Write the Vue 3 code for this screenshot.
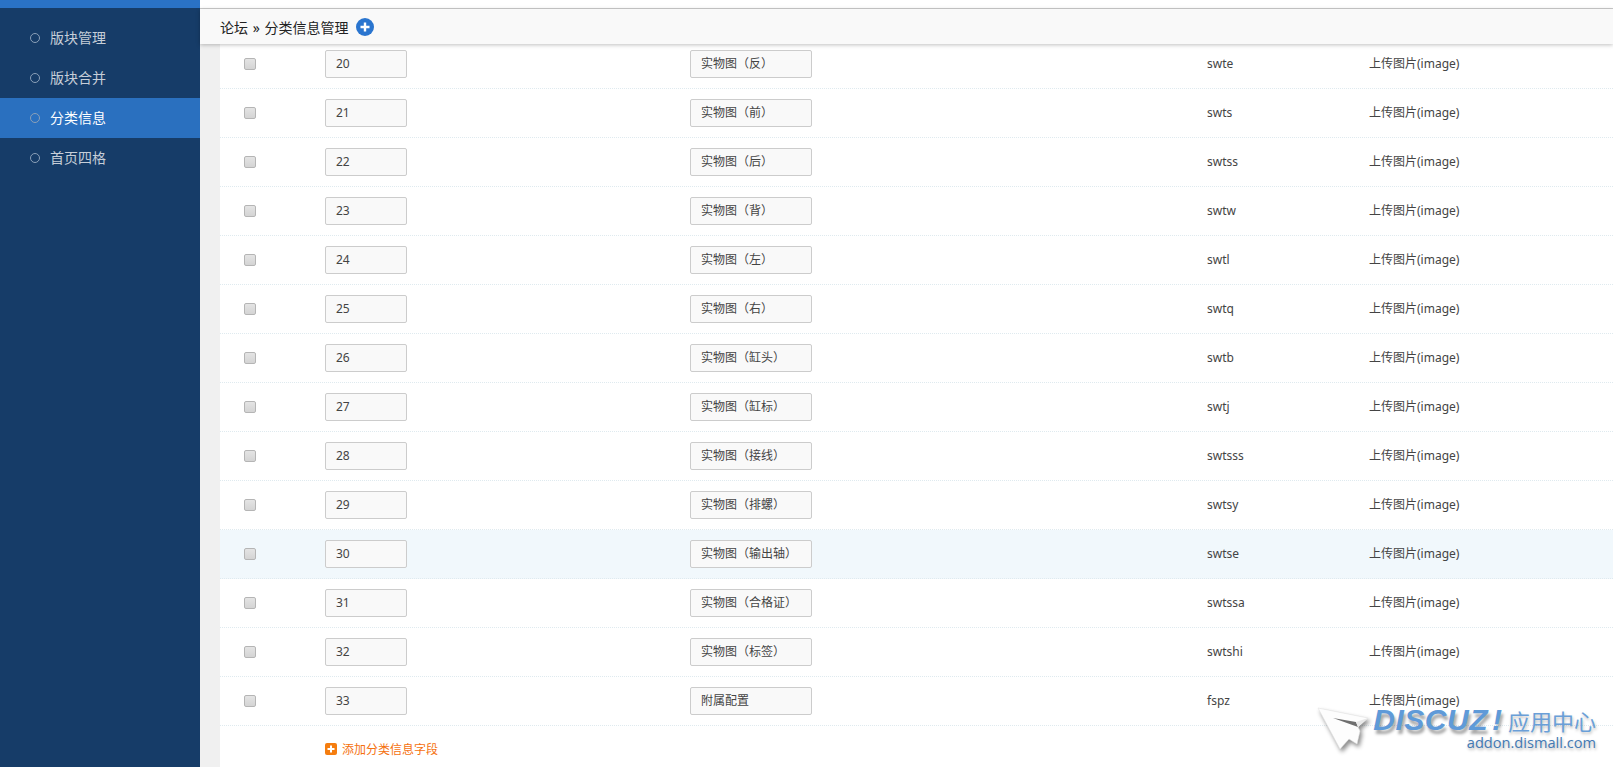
<script setup>
const navItems = [
  { label: '版块管理' },
  { label: '版块合并' },
  { label: '分类信息', active: true },
  { label: '首页四格' }
]
const rows = [
  [20, '实物图（反）', 'swte'],
  [21, '实物图（前）', 'swts'],
  [22, '实物图（后）', 'swtss'],
  [23, '实物图（背）', 'swtw'],
  [24, '实物图（左）', 'swtl'],
  [25, '实物图（右）', 'swtq'],
  [26, '实物图（缸头）', 'swtb'],
  [27, '实物图（缸标）', 'swtj'],
  [28, '实物图（接线）', 'swtsss'],
  [29, '实物图（排螺）', 'swtsy'],
  [30, '实物图（输出轴）', 'swtse'],
  [31, '实物图（合格证）', 'swtssa'],
  [32, '实物图（标签）', 'swtshi'],
  [33, '附属配置', 'fspz']
]
</script>

<template>
  <div class="page">
    <aside class="sidebar">
      <div class="brand"></div>
      <ul class="nav">
        <li v-for="item in navItems" :key="item.label" :class="['nav-item', { active: item.active }]">
          <span class="dot"></span><span class="nav-label">{{ item.label }}</span>
        </li>
      </ul>
    </aside>
    <main class="main">
      <div class="topline"></div>
      <header class="crumb">
        <span class="crumb-text">论坛 » 分类信息管理</span>
        <span class="plus-btn">
          <svg width="18" height="18" viewBox="0 0 18 18"><circle cx="9" cy="9" r="9" fill="#2a75cf"/><path d="M9 4.5v9M4.5 9h9" stroke="#fff" stroke-width="2.4"/></svg>
        </span>
      </header>
      <div class="body">
        <div class="content">
          <div v-for="r in rows" :key="r[0]" :class="['row', { hover: r[0] === 30 }]">
            <div class="c-check"><span class="check"></span></div>
            <div class="c-num"><span class="field num">{{ r[0] }}</span></div>
            <div class="c-name"><span class="field name">{{ r[1] }}</span></div>
            <div class="c-key">{{ r[2] }}</div>
            <div class="c-type">上传图片(image)</div>
          </div>
          <div class="add-row">
            <svg width="12" height="12" viewBox="0 0 12 12"><rect width="12" height="12" rx="2" fill="#f57d0f"/><path d="M6 2.5v7M2.5 6h7" stroke="#fff" stroke-width="2"/></svg>
            <span>添加分类信息字段</span>
          </div>
        </div>
      </div>
    </main>
    <div class="mark">
      <svg class="plane" width="56" height="48" viewBox="0 0 56 48">
        <path d="M2 2 L52 12 L42 21 L44 25 L41 38 L33 33 L24 43 Z" fill="#fdfdfd" stroke="#e2e2e2" stroke-width=".6"/>
        <path d="M17 12 L40 16 L42 21 Z" fill="#6f6f6f"/>
        <path d="M40 16 L52 12 L42 21 Z" fill="#e9e9e9"/>
      </svg>
      <div class="mark-text">
        <div class="mark-top"><span class="dz">DISCUZ</span><span class="bang">!</span><span class="cn">应用中心</span></div>
        <div class="mark-url">addon.dismall.com</div>
      </div>
    </div>
  </div>
</template>

<style>
html, body { margin: 0; padding: 0; background: #fff; overflow: hidden; }
</style>

<style scoped>
.page {
  position: relative;
  display: flex;
  width: 1613px;
  height: 767px;
  overflow: hidden;
  font-family: "Noto Sans", "Noto Sans CJK SC", sans-serif;
  font-size: 12px;
  color: #444;
  background: #fff;
}
.sidebar { width: 200px; flex: none; background: #163c68; }
.brand { height: 8px; background: #2a72c5; }
.nav { list-style: none; margin: 0; padding: 10px 0 0; }
.nav-item {
  display: flex;
  align-items: center;
  height: 40px;
  padding-left: 30px;
  font-size: 14px;
  color: #c6ced8;
}
.nav-label { margin-top: -2px; }
.nav-item.active { background: #2a70bf; color: #fff; }
.dot {
  width: 8px;
  height: 8px;
  margin-right: 10px;
  border: 1px solid #8ba0b8;
  border-radius: 50%;
}
.main { flex: 1; min-width: 0; display: flex; flex-direction: column; }
.topline { height: 8px; background: #fff; border-bottom: 1px solid #ccc; flex: none; }
.crumb {
  position: relative;
  z-index: 2;
  flex: none;
  display: flex;
  align-items: center;
  height: 35px;
  padding-left: 20px;
  font-size: 14px;
  color: #222;
  background: #f9f9f9;
  box-shadow: 0 1px 4px rgba(0, 0, 0, .25);
}
.crumb-text { word-spacing: 1px; }
.plus-btn { display: flex; margin-left: 8px; }
.body { flex: 1; min-height: 0; background: #f0f0f0; padding-left: 20px; overflow: hidden; }
.content { background: #fff; margin-top: -4px; height: 760px; }
.row {
  display: flex;
  align-items: center;
  height: 48px;
  border-bottom: 1px dotted #dfeaef;
}
.row.hover { background: #f1f8fc; }
.c-check { width: 105px; flex: none; padding-left: 24px; box-sizing: border-box; display: flex; }
.check {
  width: 12px;
  height: 12px;
  box-sizing: border-box;
  border: 1px solid #b5b5b5;
  border-radius: 2px;
  background: linear-gradient(#e4e4e4, #d4d4d4);
}
.c-num { width: 365px; flex: none; }
.c-name { width: 517px; flex: none; }
.field {
  display: flex;
  align-items: center;
  box-sizing: border-box;
  height: 28px;
  border: 1px solid #ccc;
  border-radius: 2px;
  background: #f9f9f9;
  color: #444;
  padding: 0 0 2px 10px;
}
.num { width: 82px; }
.name { width: 122px; }
.c-key { width: 162px; flex: none; padding-bottom: 2px; }
.c-type { flex: 1; padding-bottom: 2px; }
.add-row {
  display: flex;
  align-items: center;
  gap: 5px;
  height: 46px;
  padding-left: 105px;
  color: #f5710f;
}
.mark {
  position: absolute;
  left: 1316px;
  top: 706px;
  width: 280px;
  pointer-events: none;
}
.plane {
  position: absolute;
  left: 0;
  top: 0;
  filter: drop-shadow(2px 3px 2px rgba(0, 0, 0, .45));
}
.mark-text { display: flex; flex-direction: column; align-items: flex-end; }
.mark-top { display: flex; align-items: baseline; height: 28px; white-space: nowrap; }
.dz, .bang {
  font-family: "Liberation Sans", sans-serif;
  font-size: 30px;
  line-height: 28px;
  font-weight: 700;
  font-style: italic;
  color: #5f9ad8;
  text-shadow: 2px 4px 3px rgba(0, 0, 0, .35);
}
.dz { letter-spacing: .5px; }
.bang { margin: 0 6px 0 4px; }
.cn { font-size: 22px; line-height: 28px; color: #6a9fd8; text-shadow: 1px 2px 3px rgba(0, 0, 0, .25); }
.mark-url {
  font-family: "Open Sans", sans-serif;
  font-size: 14.6px;
  line-height: 18px;
  margin-top: -1px;
  color: #4479b3;
  text-shadow: 1px 2px 3px rgba(0, 0, 0, .3);
}
</style>
